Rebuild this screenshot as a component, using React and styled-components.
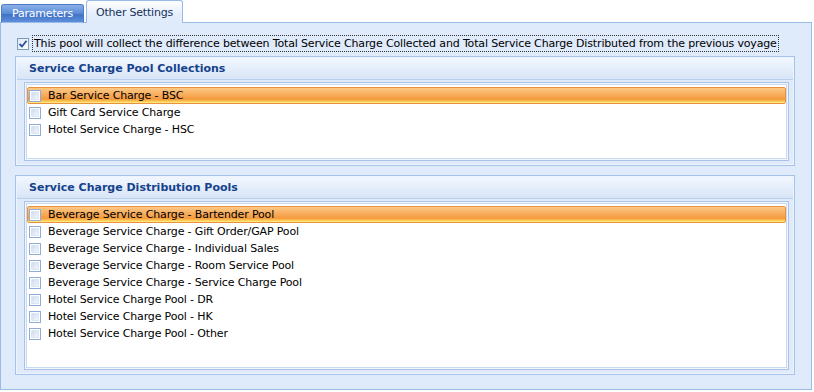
import React from "react";
import styled, { createGlobalStyle } from "styled-components";

const Global = createGlobalStyle`
  html, body { margin: 0; padding: 0; background: #ffffff; }
  body { font-family: "DejaVu Sans", Verdana, sans-serif; font-size: 10px; color: #000; }
  * { box-sizing: border-box; }
`;

const Page = styled.div`
  width: 814px;
  height: 392px;
  display: flex;
  flex-direction: column;
  padding: 0 2px 2px 0;
`;

const TabStrip = styled.div`
  display: flex;
  align-items: flex-end;
  height: 23px;
  padding-left: 1px;
  gap: 2px;
  margin-bottom: -1px;
  position: relative;
  z-index: 1;
`;

const Tab = styled.div`
  height: ${(p) => (p.$active ? "23px" : "19px")};
  padding: 0 ${(p) => (p.$active ? "9px" : "10px")};
  display: flex;
  align-items: center;
  font-size: 11px;
  letter-spacing: -0.2px;
  border: 1px solid ${(p) => (p.$active ? "#99bbe8" : "#4d7cc4")};
  border-bottom: ${(p) => (p.$active ? "none" : "1px solid #99bbe8")};
  border-radius: 3px 3px 0 0;
  color: ${(p) => (p.$active ? "#15325a" : "#ffffff")};
  background: ${(p) =>
    p.$active
      ? "linear-gradient(#ffffff, #e4eefc 60%, #dfeafa)"
      : "linear-gradient(#8cb2e8, #5b8ad6 50%, #3f6fc4 51%, #5d8fdb)"};
`;

const Panel = styled.div`
  flex: 1;
  border: 1px solid #99bbe8;
  background: #dfeafa;
  display: flex;
  flex-direction: column;
  padding: 12px 16px 13px 14px;
`;

const TopOption = styled.label`
  display: flex;
  align-items: center;
  gap: 4px;
  height: 17px;
  padding-left: 2px;
  margin-bottom: 4px;
`;

const BigCheck = styled.span`
  width: 12px;
  height: 12px;
  border: 1px solid #7f9db9;
  background: linear-gradient(135deg, #dce7f5, #ffffff);
  display: flex;
  align-items: center;
  justify-content: center;
`;

const FocusText = styled.span`
  outline: 1px dotted #333;
  outline-offset: 0;
  padding: 1px 1px;
  font-size: 11px;
  letter-spacing: -0.15px;
`;

const Group = styled.div`
  border: 1px solid #a7c3ea;
  box-shadow: inset 0 0 0 1px #eef4fd;
  background: #dfeafa;
  display: flex;
  flex-direction: column;
  padding: 1px 5px 4px 1px;
  height: ${(p) => p.$h}px;
  & + & { margin-top: 9px; }
`;

const GroupHeader = styled.div`
  height: 22px;
  display: flex;
  align-items: center;
  padding-left: 12px;
  margin: 0 -4px 0 0;
  font-weight: bold;
  font-size: 11px;
  color: #15428b;
  background: linear-gradient(#f2f7fe, #e2ecfa 60%, #d8e5f7);
  border-bottom: 1px solid #b9cfee;
`;

const ListOuter = styled.div`
  flex: 1;
  margin: 2px 0 0 7px;
  border: 1px solid #a9c2e6;
  padding: 1px;
  background: #f1f6fd;
  display: flex;
`;

const List = styled.div`
  flex: 1;
  background: #ffffff;
  border: 1px solid #c9dbf3;
  padding: 2px 0 0 0;
  display: flex;
  flex-direction: column;
`;

const Row = styled.div`
  height: 17px;
  display: flex;
  align-items: center;
  padding-left: 1px;
  gap: 7px;
  font-size: 11px;
  letter-spacing: -0.15px;
  color: #000;
  border: 1px solid ${(p) => (p.$sel ? "#e8923c" : "transparent")};
  border-radius: 2px;
  background: ${(p) =>
    p.$sel
      ? "linear-gradient(#fbc985, #f8ac5c 45%, #f59a3c 75%, #fcd25a 92%, #fff19a)"
      : "transparent"};
`;

const SmallCheck = styled.span`
  width: 12px;
  height: 12px;
  border: 1px solid #8fadd8;
  background: #ffffff;
  padding: 1px;
  display: flex;
  &::after {
    content: "";
    flex: 1;
    background: linear-gradient(135deg, #cfdcef, #f2f6fc);
    border: 1px solid #dbe6f5;
  }
`;

const collections = [
  "Bar Service Charge - BSC",
  "Gift Card Service Charge",
  "Hotel Service Charge - HSC",
];

const pools = [
  "Beverage Service Charge - Bartender Pool",
  "Beverage Service Charge - Gift Order/GAP Pool",
  "Beverage Service Charge - Individual Sales",
  "Beverage Service Charge - Room Service Pool",
  "Beverage Service Charge - Service Charge Pool",
  "Hotel Service Charge Pool - DR",
  "Hotel Service Charge Pool - HK",
  "Hotel Service Charge Pool - Other",
];

function ListGroup({ title, items, h }) {
  return (
    <Group $h={h}>
      <GroupHeader>{title}</GroupHeader>
      <ListOuter>
        <List>
          {items.map((t, i) => (
            <Row key={t} $sel={i === 0}>
              <SmallCheck />
              <span>{t}</span>
            </Row>
          ))}
        </List>
      </ListOuter>
    </Group>
  );
}

export default function App() {
  return (
    <Page>
      <Global />
      <TabStrip>
        <Tab>Parameters</Tab>
        <Tab $active>Other Settings</Tab>
      </TabStrip>
      <Panel>
        <TopOption>
          <BigCheck>
            <svg width="10" height="10" viewBox="0 0 10 10">
              <path d="M1.5 5 L4 7.5 L8.5 1.8" fill="none" stroke="#2a4f9c" strokeWidth="1.8" />
            </svg>
          </BigCheck>
          <FocusText>
            This pool will collect the difference between Total Service Charge Collected and Total Service Charge Distributed from the previous voyage
          </FocusText>
        </TopOption>
        <ListGroup title="Service Charge Pool Collections" items={collections} h={110} />
        <ListGroup title="Service Charge Distribution Pools" items={pools} h={200} />
      </Panel>
    </Page>
  );
}
